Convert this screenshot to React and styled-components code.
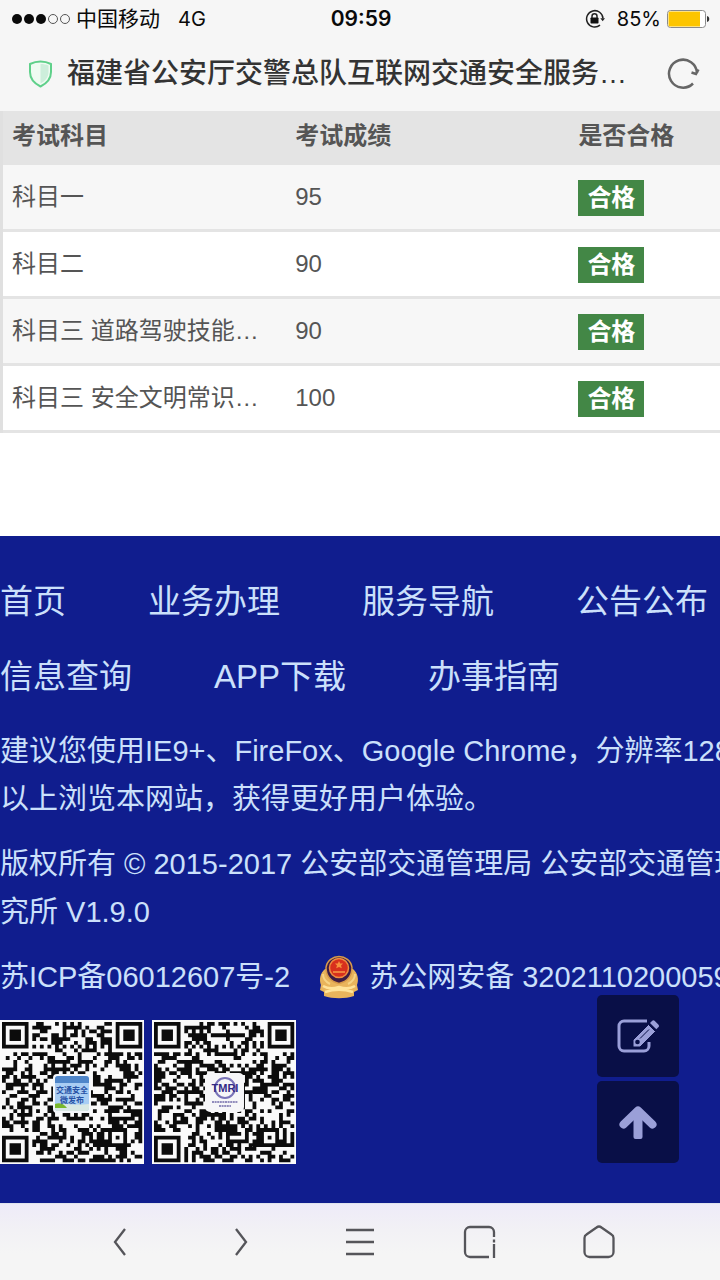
import React from 'react';
import styled, { createGlobalStyle } from 'styled-components';

const GlobalStyle = createGlobalStyle`
  * { box-sizing: border-box; }
  body {
    margin: 0;
    background: #fff;
    font-family: 'Liberation Sans', 'Noto Sans CJK SC', sans-serif;
  }
  a { color: inherit; text-decoration: none; }
  p { margin: 0; }
  button {
    display: flex;
    align-items: center;
    justify-content: center;
    padding: 0;
    border: none;
    background: none;
    color: inherit;
    cursor: pointer;
  }
  svg { display: block; flex: none; }
`;

const Page = styled.div`
  display: flex;
  flex-direction: column;
  min-height: 100vh;
  overflow: hidden;
`;

const TopArea = styled.header`
  background: #f6f6f6;
`;

const StatusBar = styled.div`
  display: grid;
  grid-template-columns: 1fr auto 1fr;
  align-items: center;
  height: 37px;
  padding: 0 10px 0 12px;
  color: #0a0a0a;
  font-family: Inter, 'Noto Sans CJK SC', sans-serif;
  font-size: 20px;
  line-height: 24px;
`;

const StatusGroup = styled.div`
  display: flex;
  align-items: center;
  justify-content: ${({ $end }) => ($end ? 'flex-end' : 'flex-start')};
  gap: 6px;
`;

const Carrier = styled.span`
  margin-right: 12px;
  font-size: 21px;
`;

const Percent = styled.span`
  margin-left: 6px;
`;

const Clock = styled.time`
  font-size: 21px;
  font-weight: 600;
`;

const AddressBar = styled.div`
  display: flex;
  align-items: center;
  gap: 14px;
  height: 74px;
  padding: 0 20px 0 28px;
`;

const PageTitle = styled.h1`
  flex: 1;
  min-width: 0;
  margin: 0;
  overflow: hidden;
  white-space: nowrap;
  color: #333;
  font-size: 28px;
  font-weight: 500;
  line-height: 40px;
`;

const Content = styled.main`
  padding-bottom: 103px;
`;

const ScoreTable = styled.table`
  width: calc(118% + 3px);
  table-layout: fixed;
  border-collapse: separate;
  border-spacing: 0;
  border-left: 3px solid #e0e0e0;
  color: #555;
  font-size: 24px;
  line-height: 36px;

  tbody tr:nth-child(odd) { background: #f7f7f7; }
`;

const HeadCell = styled.th`
  height: 54px;
  padding: 0 9px 4px;
  background: #e4e4e4;
  text-align: left;
  font-weight: bold;
`;

const Cell = styled.td`
  height: 67px;
  padding: 0 9px;
  border-bottom: 3px solid #e4e4e4;
  overflow: hidden;
  white-space: nowrap;
`;

const Badge = styled.span`
  display: inline-block;
  padding: 0 9px;
  background: #438746;
  color: #fff;
  font-weight: bold;
  vertical-align: middle;
`;

const Footer = styled.footer`
  position: relative;
  flex: 1;
  padding: 28px 0 39px;
  background: #101d8e;
  color: #cbe0fb;
  font-size: 29px;
  line-height: 48px;
  white-space: nowrap;
`;

const SiteNav = styled.nav`
  display: flex;
  flex-wrap: wrap;
  column-gap: 82px;
  margin-bottom: 13px;
  font-size: 33px;
  line-height: 75px;
`;

const Paragraph = styled.p`
  margin-bottom: 17px;
`;

const Records = styled.div`
  display: flex;
  align-items: center;
  gap: 29px;
  margin-bottom: 19px;
`;

const PoliceRecord = styled.a`
  display: flex;
  align-items: center;
  gap: 10px;
`;

const Codes = styled.div`
  display: flex;
  gap: 8px;
`;

const FloatTools = styled.div`
  position: absolute;
  right: 41px;
  bottom: 40px;
  display: flex;
  flex-direction: column;
  gap: 4px;
`;

const ToolButton = styled.button`
  width: 82px;
  height: 82px;
  border-radius: 5px;
  background: #090f47;
  color: #9a9fd8;
`;

const BrowserBar = styled.nav`
  display: grid;
  grid-template-columns: repeat(5, 1fr);
  height: 77px;
  padding: 0 60px;
  border-top: 1px solid #dfe3ee;
  background: linear-gradient(#eeebf8, #f2f1f5 35%, #f5f5f5 65%);
  color: #55555a;
`;

const scores = [
  { subject: '科目一', score: 95 },
  { subject: '科目二', score: 90 },
  { subject: '科目三 道路驾驶技能…', score: 90 },
  { subject: '科目三 安全文明常识…', score: 100 },
];

const links = ['首页', '业务办理', '服务导航', '公告公布', '信息查询', 'APP下载', '办事指南'];

const SIZE = 37;

function inSquare(x, y, left, top, size) {
  return x >= left && x < left + size && y >= top && y < top + size;
}

// rings of a finder (7x7) or alignment (5x5) mark
function ring(x, y, cx, cy, light) {
  return Math.max(Math.abs(x - cx), Math.abs(y - cy)) !== light;
}

function buildCode(seed) {
  let state = seed;
  let d = '';
  for (let y = 0; y < SIZE; y++) {
    for (let x = 0; x < SIZE; x++) {
      state = (Math.imul(state, 1664525) + 1013904223) >>> 0;
      let dark = state / 4294967296 < 0.5;
      if (inSquare(x, y, 0, 0, 8)) dark = x < 7 && y < 7 && ring(x, y, 3, 3, 2);
      else if (inSquare(x, y, 29, 0, 8)) dark = x > 29 && y < 7 && ring(x, y, 33, 3, 2);
      else if (inSquare(x, y, 0, 29, 8)) dark = x < 7 && y > 29 && ring(x, y, 3, 33, 2);
      else if (inSquare(x, y, 28, 28, 5)) dark = ring(x, y, 30, 30, 1);
      else if (x === 6 || y === 6) dark = (x + y) % 2 === 0;
      if (dark) d += `M${x} ${y}h1v1h-1z`;
    }
  }
  return d;
}

const weiboCode = buildCode(2015);
const tmriCode = buildCode(90517);

function QrCode({ label, path, children }) {
  return (
    <svg width="144" height="144" viewBox="0 0 144 144" role="img" aria-label={label}>
      <rect width="144" height="144" fill="#fafafa" />
      <path d={path} fill="#0c0c0c" transform="translate(2 2) scale(3.79)" />
      {children}
    </svg>
  );
}

function SignalDots() {
  return (
    <svg width="58" height="12" viewBox="0 0 58 12">
      {[5, 17, 29].map((x) => <circle key={x} cx={x} cy="6" r="5" fill="#0a0a0a" />)}
      {[41, 53].map((x) => <circle key={x} cx={x} cy="6" r="4.5" fill="none" stroke="#555" />)}
    </svg>
  );
}

function LockIcon() {
  return (
    <svg width="20" height="20" viewBox="0 0 20 20" fill="none" stroke="#222" strokeWidth="1.5">
      <path d="M15 16.2A8.2 8.2 0 1 1 18 9.5" />
      <path d="M15.3 9.3h4.7l-2.3 3z" fill="#222" stroke="none" />
      <rect x="5.500" y="8.5" width="8" height="6" rx=".7" fill="#111" stroke="none" />
      <path d="M7 9V7.200a2.500 2.500 0 0 1 5 0V9" />
    </svg>
  );
}

function Battery() {
  return (
    <svg width="43" height="18" viewBox="0 0 43 18">
      <rect x=".5" y=".5" width="38" height="17" rx="3" fill="#fff" stroke="#8b8b8b" />
      <path d="M3 1.500h30v15H3a1.500 1.500 0 0 1-1.500-1.500V3A1.500 1.500 0 0 1 3 1.500z" fill="#fdc500" />
      <path d="M40 6c3 .5 3 5.500 0 6z" fill="#333" />
    </svg>
  );
}

function Shield() {
  return (
    <svg width="25" height="28" viewBox="0 0 25 28">
      <path d="M12.500 1.500C9 1.500 5 2.500 2 4v8c0 7 4.500 11.500 10.500 14.500C18.500 23.500 23 19 23 12V4c-3-1.500-7-2.500-10.500-2.500z" fill="#effbf2" stroke="#5fd08a" strokeWidth="2" />
      <path d="M12.500 4v19.500c4.500-2.500 8-6 8-11.500V5.500C18 4.500 15.500 4 12.500 4z" fill="#cdeedb" />
    </svg>
  );
}

function Emblem() {
  return (
    <svg width="40" height="44" viewBox="0 0 40 44">
      <path d="M6 14C1 18 0 25 2 30l-1 5 4 2v4c9 3 21 3 30 0v-4l4-2-1-5c2-5 1-12-4-16z" fill="#e9b45c" />
      <path d="M20 1.500c6 0 12 4 13 11 0 9-5 14-13 16C12 26.500 7 21.500 7 12.500c1-7 7-11 13-11z" fill="#3d1b44" stroke="#d79a4a" strokeWidth="1.500" />
      <circle cx="20" cy="13" r="9.500" fill="#d8301d" stroke="#f08c3f" strokeWidth="1.500" />
      <path d="M20 6l1.200 2.500h2.800l-2 2 .8 2.800L20 12l-2.800 1.300.8-2.800-2-2h2.800z" fill="#f7903c" />
      <path d="M14 16h12v2H14z" fill="#f0803b" />
      <path d="M4 31c5 3 10 3 16 1 6 2 11 2 16-1M6 37c9-3 19-3 28 0" fill="none" stroke="#ffe39a" strokeWidth="2.500" />
      <path d="M4 19c0 5 3 8 7 10M36 19c0 5-3 8-7 10" fill="none" stroke="#f7d486" strokeWidth="2" />
    </svg>
  );
}

export default function App() {
  return (
    <Page>
      <GlobalStyle />
      <TopArea>
        <StatusBar>
          <StatusGroup>
            <SignalDots />
            <Carrier>中国移动</Carrier>
            <span>4G</span>
          </StatusGroup>
          <Clock>09:59</Clock>
          <StatusGroup $end>
            <LockIcon />
            <Percent>85%</Percent>
            <Battery />
          </StatusGroup>
        </StatusBar>
        <AddressBar>
          <Shield />
          <PageTitle>福建省公安厅交警总队互联网交通安全服务…</PageTitle>
          <button type="button" aria-label="刷新">
            <svg width="34" height="34" viewBox="0 0 34 34" fill="none" stroke="#666" strokeWidth="2.500">
              <path d="M27 26.500A14 14 0 1 1 31 16" />
              <path d="M25.500 15.500 30 17l2.500-4.500" />
            </svg>
          </button>
        </AddressBar>
      </TopArea>

      <Content>
        <ScoreTable>
          <thead>
            <tr>
              <HeadCell scope="col">考试科目</HeadCell>
              <HeadCell scope="col">考试成绩</HeadCell>
              <HeadCell scope="col">是否合格</HeadCell>
            </tr>
          </thead>
          <tbody>
            {scores.map(({ subject, score }) => (
              <tr key={subject}>
                <Cell>{subject}</Cell>
                <Cell>{score}</Cell>
                <Cell><Badge>合格</Badge></Cell>
              </tr>
            ))}
          </tbody>
        </ScoreTable>
      </Content>

      <Footer>
        <SiteNav>
          {links.map((name) => <a key={name} href="#top">{name}</a>)}
        </SiteNav>
        <Paragraph>
          建议您使用IE9+、FireFox、Google Chrome，分辨率128
          <br />
          以上浏览本网站，获得更好用户体验。
        </Paragraph>
        <Paragraph>
          版权所有 © 2015-2017 公安部交通管理局 公安部交通管理
          <br />
          究所 V1.9.0
        </Paragraph>
        <Records>
          <a href="#icp">苏ICP备06012607号-2</a>
          <PoliceRecord href="#police">
            <Emblem />
            苏公网安备 3202110200059
          </PoliceRecord>
        </Records>
        <Codes>
          <QrCode label="交通安全微发布" path={weiboCode}>
            <rect x="53" y="54" width="38" height="39" rx="4" fill="#f4f7fb" />
            <rect x="55" y="56" width="34" height="35" rx="3" fill="#a9cdf3" />
            <path d="M55 63v-4a3 3 0 0 1 3-3h28a3 3 0 0 1 3 3v4z" fill="#4f86c9" />
            <path d="M55 84c8-2 15 2 34 0v4a3 3 0 0 1-3 3H58a3 3 0 0 1-3-3z" fill="#d9e8e4" />
            <path d="M55 84c5-2 9 0 12 4H55z" fill="#79b82d" />
            <g fill="#2752a5" fontSize="8" fontWeight="bold" textAnchor="middle">
              <text x="72" y="73">交通安全</text>
              <text x="72" y="83">微发布</text>
            </g>
          </QrCode>
          <QrCode label="TMRI" path={tmriCode}>
            <rect x="53" y="53" width="39" height="39" rx="5" fill="#f6f6f8" />
            <circle cx="73" cy="68" r="10" fill="none" stroke="#7a74b8" strokeWidth="2" />
            <text x="73" y="72" fill="#332a86" fontSize="11" fontWeight="bold" textAnchor="middle">TMRI</text>
            <path d="M60 82h26M67 86h12" stroke="#918cbc" strokeWidth="2" strokeDasharray="2 .6" />
          </QrCode>
        </Codes>
        <FloatTools>
          <ToolButton type="button" aria-label="反馈">
            <svg width="42" height="34" viewBox="0 0 42 34" fill="none" stroke="currentColor" strokeWidth="3">
              <path d="M30 2H7a5 5 0 0 0-5 5v20a5 5 0 0 0 5 5h20a5 5 0 0 0 5-5v-4" />
              <path d="M16 21 31.500 5.500l7 7-15.500 15.500h-7z" fill="currentColor" stroke="#090f47" strokeWidth="1" />
              <path d="M33 4l2-2a2 2 0 0 1 2.800 0l3.500 3.500a2 2 0 0 1 0 2.800l-2 2z" fill="currentColor" stroke="none" />
              <path d="M23 19.500l9-9" stroke="#090f47" strokeWidth="1" />
              <circle cx="20.500" cy="23" r="2.300" fill="#090f47" stroke="none" />
            </svg>
          </ToolButton>
          <ToolButton type="button" aria-label="返回顶部">
            <svg width="38" height="38" viewBox="0 0 38 38" fill="none" stroke="currentColor" strokeLinecap="round" strokeLinejoin="round">
              <path d="M4.500 21.500 19 7.500 33.500 21.500" strokeWidth="8" />
              <path d="M19 9v24.500" strokeWidth="9" strokeLinecap="butt" />
              <path d="M16.500 34h5" strokeWidth="4" />
            </svg>
          </ToolButton>
        </FloatTools>
      </Footer>

      <BrowserBar>
        <button type="button" aria-label="后退">
          <svg width="34" height="34" viewBox="0 0 34 34" fill="none" stroke="currentColor" strokeWidth="2.300"><path d="M22 4 12 17l10 13" /></svg>
        </button>
        <button type="button" aria-label="前进">
          <svg width="34" height="34" viewBox="0 0 34 34" fill="none" stroke="currentColor" strokeWidth="2.300"><path d="M13 4l10 13-10 13" /></svg>
        </button>
        <button type="button" aria-label="菜单">
          <svg width="34" height="34" viewBox="0 0 34 34" fill="none" stroke="currentColor" strokeWidth="2.300"><path d="M3 5h28M3 17h28M3 29h28" /></svg>
        </button>
        <button type="button" aria-label="窗口">
          <svg width="34" height="34" viewBox="0 0 34 34" fill="none" stroke="currentColor" strokeWidth="2.300">
            <path d="M26 32H7a5 5 0 0 1-5-5V7a5 5 0 0 1 5-5h19a5 5 0 0 1 5 5v5M31 14.500v3M31 19v14" />
          </svg>
        </button>
        <button type="button" aria-label="主页">
          <svg width="34" height="34" viewBox="0 0 34 34" fill="none" stroke="currentColor" strokeWidth="2.300" strokeLinejoin="round">
            <path d="M1.500 13a4 4 0 0 1 2-3.500L13.500 2.500a4 4 0 0 1 5 0l10 7a4 4 0 0 1 2 3.500v14a5 5 0 0 1-5 5h-19a5 5 0 0 1-5-5z" />
          </svg>
        </button>
      </BrowserBar>
    </Page>
  );
}
